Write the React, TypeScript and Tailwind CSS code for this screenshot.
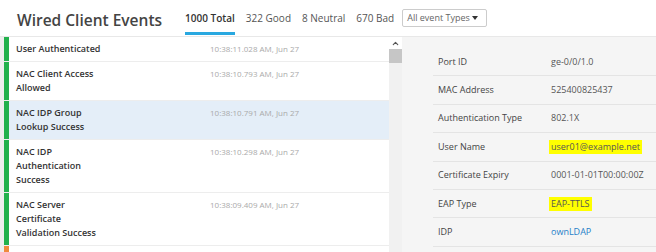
import { ChevronUp } from "lucide-react";

type EventRow = {
  lines: string[];
  time: string;
  status: "good" | "bad";
  selected?: boolean;
};

const events: EventRow[] = [
  { lines: ["User Authenticated"], time: "10:38:11.028 AM, Jun 27", status: "good" },
  { lines: ["NAC Client Access", "Allowed"], time: "10:38:10.793 AM, Jun 27", status: "good" },
  { lines: ["NAC IDP Group", "Lookup Success"], time: "10:38:10.791 AM, Jun 27", status: "good", selected: true },
  { lines: ["NAC IDP", "Authentication", "Success"], time: "10:38:10.298 AM, Jun 27", status: "good" },
  { lines: ["NAC Server", "Certificate", "Validation Success"], time: "10:38:09.409 AM, Jun 27", status: "good" },
];

const details: { label: string; value: string; kind?: "mark" | "link" }[] = [
  { label: "Port ID", value: "ge-0/0/1.0" },
  { label: "MAC Address", value: "525400825437" },
  { label: "Authentication Type", value: "802.1X" },
  { label: "User Name", value: "user01@example.net", kind: "mark" },
  { label: "Certificate Expiry", value: "0001-01-01T00:00:00Z" },
  { label: "EAP Type", value: "EAP-TTLS", kind: "mark" },
  { label: "IDP", value: "ownLDAP", kind: "link" },
];

const tabs = ["1000 Total", "322 Good", "8 Neutral", "670 Bad"];

export default function App() {
  return (
    <div className="w-[656px] h-[252px] overflow-hidden bg-white flex flex-col font-['Open_Sans',sans-serif]">
      {/* header */}
      <div className="h-[37px] shrink-0 border-b border-[#e8e8e8] flex items-stretch pl-[17px]">
        <h1 className="self-start pt-[8px] text-[15.5px] leading-[24px] font-semibold text-[#444]">
          Wired Client Events
        </h1>
        <div className="flex ml-[23px] gap-[11px]">
          {tabs.map((t, i) => (
            <div
              key={t}
              className={
                i === 0
                  ? "flex items-center pt-[5px] mb-[1px] border-b-[3px] border-[#29a8e0] text-[10px] font-semibold text-[#333]"
                  : "flex items-center pt-[5px] mb-[1px] border-b-[3px] border-transparent text-[10px] text-[#555]"
              }
            >
              {t}
            </div>
          ))}
        </div>
        <div className="self-start mt-[9px] ml-[8px] w-[85px] h-[18px] border border-[#ccc] rounded-[2px] flex items-center justify-between pl-[4px] pr-[8px] text-[9px] text-[#666]">
          <span>All event Types</span>
          <span className="w-0 h-0 border-l-[3px] border-r-[3px] border-t-[4px] border-l-transparent border-r-transparent border-t-[#333]" />
        </div>
      </div>

      {/* body */}
      <div className="flex flex-1 min-h-0">
        <div className="w-[389px] shrink-0 border-l-4 border-[#eeeeee] flex flex-col">
          {events.map((e) => (
            <div
              key={e.time}
              className={`flex border-b border-[#ededed] ${e.selected ? "bg-[#e4eef8]" : "bg-white"}`}
            >
              <div className={`w-[5px] shrink-0 ${e.status === "good" ? "bg-[#22b14c]" : "bg-[#f08a3c]"}`} />
              <div className="flex py-[5px] pl-[7px]">
                <div className="w-[194px] text-[9px] leading-[14px] font-semibold text-[#333]">
                  {e.lines.map((l) => (
                    <div key={l}>{l}</div>
                  ))}
                </div>
                <div className="text-[8px] leading-[13px] text-[#aaa]">{e.time}</div>
              </div>
            </div>
          ))}
          {/* next (bad) event, only its colour bar shows */}
          <div className="flex flex-1 bg-white">
            <div className="w-[5px] shrink-0 bg-[#f08a3c]" />
          </div>
        </div>

        {/* scrollbar */}
        <div className="w-[13px] shrink-0 bg-[#f1f1f1] flex flex-col">
          <div className="h-[12px] bg-white flex items-center justify-center">
            <ChevronUp className="w-[9px] h-[9px] text-[#555]" strokeWidth={3} />
          </div>
          <div className="h-[14px] bg-[#c6c6c6]" />
        </div>

        {/* details */}
        <div className="flex-1 bg-[#f5f5f5] pt-[11px] pl-[31px]">
          {details.map((d) => (
            <div key={d.label} className="h-[28.4px] flex items-center border-b border-[#e4e4e4] pl-[5px] text-[9px] leading-[14px]">
              <div className="w-[113px] font-medium text-[#444]">{d.label}</div>
              {d.kind === "mark" ? (
                <span className="bg-[#ffff00] px-[2px] -ml-[2px] text-[#555]">{d.value}</span>
              ) : d.kind === "link" ? (
                <span className="text-[#1f80c8]">{d.value}</span>
              ) : (
                <span className="text-[#555]">{d.value}</span>
              )}
            </div>
          ))}
        </div>
      </div>
    </div>
  );
}
